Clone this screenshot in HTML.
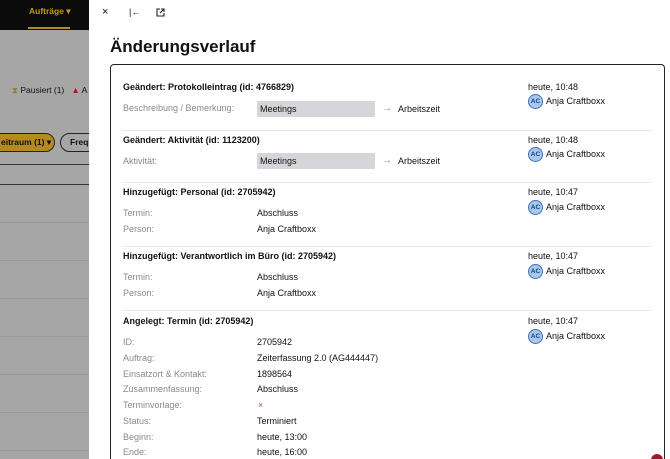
<!DOCTYPE html>
<html><head><meta charset="utf-8"><style>
*{margin:0;padding:0;box-sizing:border-box}
html{width:670px;height:459px;overflow:hidden}
body{width:670px;height:459px;overflow:hidden;position:relative;font-family:"Liberation Sans",Arial,sans-serif;background:#a6a6a6;font-size:9px;color:#111}
.a{position:absolute;white-space:nowrap}
.h{font-weight:bold;font-size:9px}
.l{color:#8a8a8a}
.box{position:absolute;background:#d6d6da;height:16px;width:118px}
.sep{position:absolute;left:122px;width:530px;height:1px;background:#e8e8e8}
.av{position:absolute;width:15px;height:15px;border-radius:50%;background:#a9c8ee;border:1px solid #3d6fb5;font-size:6.5px;font-weight:bold;color:#1d3f78;text-align:center;line-height:13px}
</style></head><body>
<div class="a" style="left:0;top:0;width:89px;height:30px;background:#0b0b0b"></div>
<div class="a" style="left:29px;top:6px;color:#c8952a;font-weight:bold;font-size:8.5px">Aufträge ▾</div>
<div class="a" style="left:28px;top:27px;width:42px;height:2px;background:#b7862a"></div>
<div class="a" style="left:12px;top:85px;font-size:8.5px;color:#111"><span style="color:#9a7a30">⧗</span> Pausiert (1) &nbsp; <span style="color:#a0192b">▲</span> A</div>
<div class="a" style="left:-20px;top:133px;width:75px;height:19px;border-radius:10px;background:#b78a20;border:1px solid #222;font-size:8.5px;font-weight:bold;line-height:17px;padding-left:20px">eitraum (1) ▾</div>
<div class="a" style="left:60px;top:133px;width:40px;height:19px;border-radius:10px;border:1px solid #222;font-size:8.5px;font-weight:bold;line-height:17px;padding-left:9px">Frequ</div>
<div class="a" style="left:0;top:164px;width:89px;height:1px;background:#333"></div>
<div class="a" style="left:0;top:184px;width:89px;height:1px;background:#333"></div>
<div class="a" style="left:0;top:222px;width:89px;height:1px;background:#999"></div>
<div class="a" style="left:0;top:260px;width:89px;height:1px;background:#999"></div>
<div class="a" style="left:0;top:298px;width:89px;height:1px;background:#999"></div>
<div class="a" style="left:0;top:336px;width:89px;height:1px;background:#999"></div>
<div class="a" style="left:0;top:374px;width:89px;height:1px;background:#999"></div>
<div class="a" style="left:0;top:412px;width:89px;height:1px;background:#999"></div>
<div class="a" style="left:0;top:450px;width:89px;height:1px;background:#999"></div>

<div class="a" style="left:89px;top:0;width:581px;height:459px;background:#fff"></div>
<div class="a" style="left:102px;top:6px;font-size:11px">×</div>
<div class="a" style="left:129px;top:7px;font-size:9px">|←</div>
<svg class="a" style="left:156px;top:8px" width="9" height="9" viewBox="0 0 9 9" fill="none" stroke="#222" stroke-width="1.1"><path d="M4 1H1v7h7V5M5 1h3v3M8 1L4 5"/></svg>
<div class="a" style="left:110px;top:37px;font-size:17px;font-weight:bold">Änderungsverlauf</div>
<div class="a" style="left:110px;top:64px;width:555px;height:400px;border:1.5px solid #222;border-bottom:none;border-radius:4px 4px 0 0"></div>

<div class="a h" style="left:123px;top:82px">Geändert: Protokolleintrag (id: 4766829)</div>
<div class="a l" style="left:123px;top:103px">Beschreibung / Bemerkung:</div>
<div class="box" style="left:257px;top:101px"></div><div class="a" style="left:260px;top:104px">Meetings</div>
<div class="a l" style="left:382px;top:103px;font-size:10px">→</div><div class="a" style="left:398px;top:104px">Arbeitszeit</div>
<div class="a" style="left:528px;top:82px">heute, 10:48</div>
<div class="av" style="left:528px;top:94px">AC</div><div class="a" style="left:546px;top:96px">Anja Craftboxx</div>
<div class="sep" style="top:130px"></div>

<div class="a h" style="left:123px;top:135px">Geändert: Aktivität (id: 1123200)</div>
<div class="a l" style="left:123px;top:156px">Aktivität:</div>
<div class="box" style="left:257px;top:153px"></div><div class="a" style="left:260px;top:156px">Meetings</div>
<div class="a l" style="left:382px;top:155px;font-size:10px">→</div><div class="a" style="left:398px;top:156px">Arbeitszeit</div>
<div class="a" style="left:528px;top:135px">heute, 10:48</div>
<div class="av" style="left:528px;top:147px">AC</div><div class="a" style="left:546px;top:149px">Anja Craftboxx</div>
<div class="sep" style="top:182px"></div>

<div class="a h" style="left:123px;top:187px">Hinzugefügt: Personal (id: 2705942)</div>
<div class="a l" style="left:123px;top:208px">Termin:</div><div class="a" style="left:257px;top:208px">Abschluss</div>
<div class="a l" style="left:123px;top:224px">Person:</div><div class="a" style="left:257px;top:224px">Anja Craftboxx</div>
<div class="a" style="left:528px;top:187px">heute, 10:47</div>
<div class="av" style="left:528px;top:200px">AC</div><div class="a" style="left:546px;top:202px">Anja Craftboxx</div>
<div class="sep" style="top:246px"></div>

<div class="a h" style="left:123px;top:251px">Hinzugefügt: Verantwortlich im Büro (id: 2705942)</div>
<div class="a l" style="left:123px;top:272px">Termin:</div><div class="a" style="left:257px;top:272px">Abschluss</div>
<div class="a l" style="left:123px;top:288px">Person:</div><div class="a" style="left:257px;top:288px">Anja Craftboxx</div>
<div class="a" style="left:528px;top:251px">heute, 10:47</div>
<div class="av" style="left:528px;top:264px">AC</div><div class="a" style="left:546px;top:266px">Anja Craftboxx</div>
<div class="sep" style="top:310px"></div>

<div class="a h" style="left:123px;top:316px">Angelegt: Termin (id: 2705942)</div>
<div class="a" style="left:528px;top:316px">heute, 10:47</div>
<div class="av" style="left:528px;top:329px">AC</div><div class="a" style="left:546px;top:331px">Anja Craftboxx</div>
<div class="a l" style="left:123px;top:337px">ID:</div><div class="a" style="left:257px;top:337px">2705942</div>
<div class="a l" style="left:123px;top:353px">Auftrag:</div><div class="a" style="left:257px;top:353px">Zeiterfassung 2.0 (AG444447)</div>
<div class="a l" style="left:123px;top:369px">Einsatzort &amp; Kontakt:</div><div class="a" style="left:257px;top:369px">1898564</div>
<div class="a l" style="left:123px;top:384px">Zusammenfassung:</div><div class="a" style="left:257px;top:384px">Abschluss</div>
<div class="a l" style="left:123px;top:400px">Terminvorlage:</div><div class="a" style="left:258px;top:400px;color:#c0485c">×</div>
<div class="a l" style="left:123px;top:416px">Status:</div><div class="a" style="left:257px;top:416px">Terminiert</div>
<div class="a l" style="left:123px;top:432px">Beginn:</div><div class="a" style="left:257px;top:432px">heute, 13:00</div>
<div class="a l" style="left:123px;top:447px">Ende:</div><div class="a" style="left:257px;top:447px">heute, 16:00</div>
<div class="a" style="left:651px;top:454px;width:12px;height:12px;border-radius:50%;background:#a0192b"></div>
</body></html>
